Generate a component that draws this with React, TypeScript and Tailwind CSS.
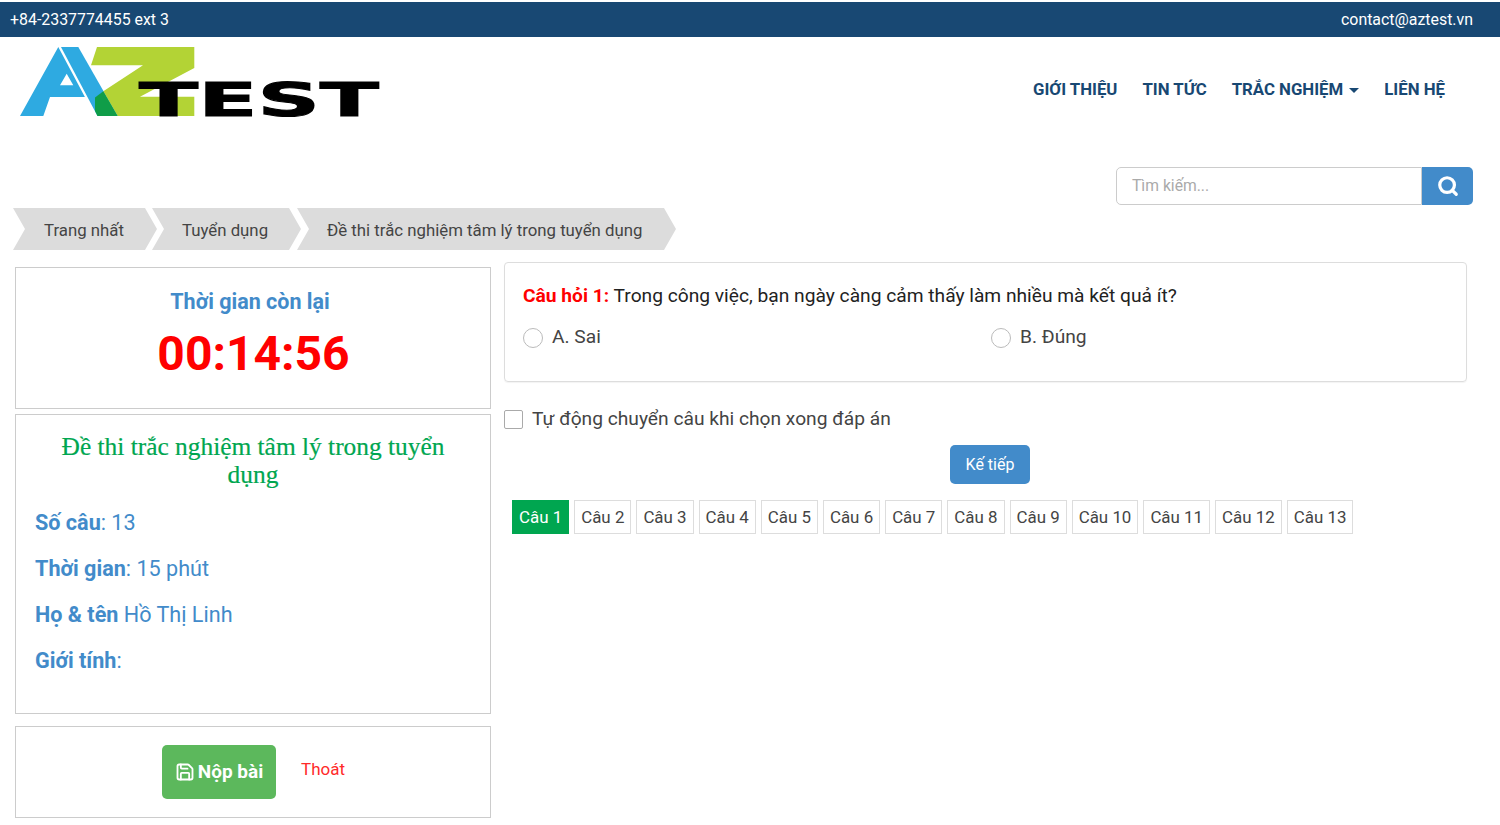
import React from "react";
import { Save, Search } from "lucide-react";

const navItems = ["GIỚI THIỆU", "TIN TỨC", "TRẮC NGHIỆM", "LIÊN HỆ"];
const pages = Array.from({ length: 13 }, (_, i) => i + 1);

// viewBox uses page coordinates so the shapes are easy to compare with the screenshot
function Logo() {
  return (
    <svg width="365" height="84" viewBox="19 47 365 84" className="block">
      <path fillRule="evenodd" d="M20 116L58.3 47L84.9 97H50L43.3 116ZM60 85.3H73.3L66.7 73.7Z" fill="#2eaae1" />
      <path d="M61 47H78.3L117.7 116H97.5Z" fill="#2eaae1" />
      <path d="M97 47H194.3V68L140 96.7H194.3V116H117.7L103.3 91.3L143 65.3H91Z" fill="#b3d335" />
      <path d="M95 97.5L103.3 91.3L117.7 116H97.5L95 111Z" fill="#0f9d48" />
      <text x="139" y="115.5" fontFamily="DejaVu Sans" fontWeight="700" fontSize="47" textLength="240" lengthAdjust="spacingAndGlyphs" fill="#000" stroke="#000" strokeWidth="1">
        TEST
      </text>
    </svg>
  );
}

function Crumb({ label, className }: { label: string; className: string }) {
  return (
    <div className={`flex h-[42px] items-center bg-[#dcdcdc] pt-[4px] text-[16.8px] text-[#444] [clip-path:polygon(0_0,calc(100%-12px)_0,100%_50%,calc(100%-12px)_100%,0_100%,12px_50%)] ${className}`}>
      {label}
    </div>
  );
}

export default function App() {
  return (
    <div className="min-h-[825px] overflow-hidden bg-white pt-[2px] font-['Roboto',sans-serif] text-[#333]">
      <div className="flex h-[35px] items-center justify-between bg-[#184873] pl-[10px] pr-[27px] text-[15.9px] text-white">
        <span>+84-2337774455 ext 3</span>
        <span>contact@aztest.vn</span>
      </div>

      <header className="flex h-[130px] items-start justify-between pl-[19px] pr-[55px] pt-[10px]">
        <Logo />
        <nav className="mt-[30px] flex items-center gap-[25px] text-[16.8px] font-bold text-[#184873]">
          {navItems.map((item) => (
            <a key={item} className="flex items-center gap-[6px]">
              {item}
              {item === "TRẮC NGHIỆM" && <span className="mt-[2px] border-x-[5px] border-t-[5px] border-x-transparent border-t-[#184873]" />}
            </a>
          ))}
        </nav>
      </header>

      <div className="flex justify-end pr-[27px]">
        <div className="flex h-[38px] w-[357px]">
          <div className="flex flex-1 items-center rounded-l-[5px] border border-[#ccc] pl-[15px] text-[15.7px] text-[#aaa]">Tìm kiếm...</div>
          <button className="flex w-[51px] items-center justify-center rounded-r-[5px] bg-[#428bca] text-white">
            <Search size={22} strokeWidth={3.5} />
          </button>
        </div>
      </div>

      <div className="ml-[13px] mt-[3px] flex">
        <Crumb label="Trang nhất" className="w-[144px] pl-[31px]" />
        <Crumb label="Tuyển dụng" className="ml-[-5px] w-[149px] pl-[30px]" />
        <Crumb label="Đề thi trắc nghiệm tâm lý trong tuyển dụng" className="ml-[-4px] w-[379px] pl-[30px]" />
      </div>

      <main className="mt-[12px] flex items-start pl-[15px]">
        <aside className="mt-[5px] w-[476px]">
          <section className="flex h-[142px] flex-col items-center border border-[#ccc] pt-[19px]">
            <div className="mr-[6px] text-[21.5px] font-bold leading-[30px] text-[#428bca]">Thời gian còn lại</div>
            <div className="ml-[1px] mt-[8px] text-[48px] font-bold leading-[58px] text-[#ff0000]">00:14:56</div>
          </section>

          <section className="mt-[5px] h-[300px] border border-[#ccc] px-[19px] pt-[17px]">
            <h2 className="px-[20px] text-center font-['Liberation_Serif',serif] text-[25.4px] leading-[28px] text-[#00a650] [-webkit-text-stroke:0.2px_#00a650]">Đề thi trắc nghiệm tâm lý trong tuyển dụng</h2>
            <div className="mt-[21px] flex flex-col gap-[18px] text-[21.6px] leading-[28px] text-[#428bca]">
              <p><b className="font-bold">Số câu</b>: 13</p>
              <p><b className="font-bold">Thời gian</b>: 15 phút</p>
              <p><b className="font-bold">Họ &amp; tên</b> Hồ Thị Linh</p>
              <p><b className="font-bold">Giới tính</b>:</p>
            </div>
          </section>

          <section className="mt-[12px] flex h-[92px] items-start border border-[#ccc] pl-[146px] pt-[18px]">
            <button className="flex h-[54px] w-[114px] items-center justify-center gap-[3px] rounded-[5px] bg-[#5cb85c] text-[19px] font-bold text-white">
              <Save size={20} strokeWidth={2.2} />
              Nộp bài
            </button>
            <a className="ml-[25px] mt-[12px] text-[17px] text-[#ff2a2a]">Thoát</a>
          </section>
        </aside>

        <section className="ml-[13px] w-[963px]">
          <div className="h-[120px] rounded-[4px] border border-[#ddd] pl-[18px] pt-[20px] shadow-[0_1px_1px_rgba(0,0,0,0.05)]">
            <p className="text-[19.2px] leading-[26px] text-[#222]">
              <b className="font-bold text-[#ff0000]">Câu hỏi 1:</b> Trong công việc, bạn ngày càng cảm thấy làm nhiều mà kết quả ít?
            </p>
            <div className="mt-[15px] flex text-[19.2px] leading-[26px] text-[#444]">
              <label className="flex w-[468px] items-center gap-[9px]">
                <span className="mt-[1px] h-[20px] w-[20px] rounded-full border border-[#bbb]" />
                A. Sai
              </label>
              <label className="flex items-center gap-[9px]">
                <span className="mt-[1px] h-[20px] w-[20px] rounded-full border border-[#bbb]" />
                B. Đúng
              </label>
            </div>
          </div>

          <label className="mt-[24px] flex h-[26px] items-center gap-[9px] text-[19.2px] text-[#444]">
            <span className="h-[19px] w-[19px] rounded-[2px] border border-[#aaa]" />
            Tự động chuyển câu khi chọn xong đáp án
          </label>

          <div className="mt-[13px] flex justify-center">
            <button className="ml-[9px] h-[39px] w-[80px] rounded-[5px] bg-[#428bca] text-[16px] text-white">Kế tiếp</button>
          </div>

          <div className="ml-[8px] mt-[16px] flex gap-[5px]">
            {pages.map((n) => (
              <button
                key={n}
                className={n === 1
                  ? "h-[34px] border border-[#00a650] bg-[#00a650] px-[6px] pt-[1px] text-[16.9px] text-white"
                  : "h-[34px] border border-[#ddd] bg-white px-[6px] pt-[1px] text-[16.9px] text-[#444]"}
              >
                Câu {n}
              </button>
            ))}
          </div>
        </section>
      </main>
    </div>
  );
}
